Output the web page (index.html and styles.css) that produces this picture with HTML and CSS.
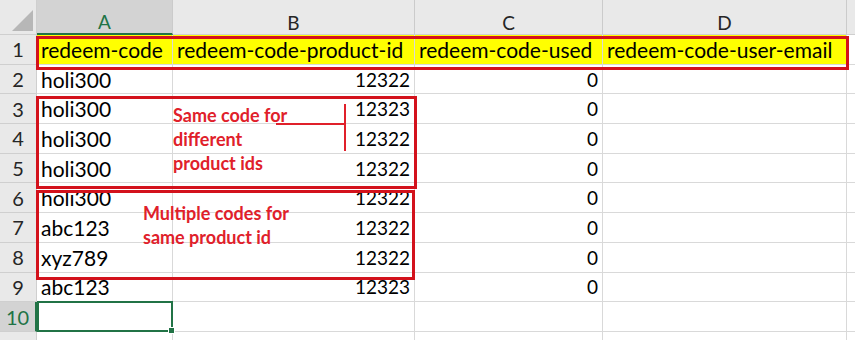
FILE: index.html
```html
<!DOCTYPE html>
<html>
<head>
<meta charset="utf-8">
<link rel="stylesheet" href="styles.css">
</head>
<body>
<div class="sheet">
  <div class="grid">
    <div class="hd corner"><span class="tri"></span></div>
    <div class="hd col sel">A</div>
    <div class="hd col">B</div>
    <div class="hd col">C</div>
    <div class="hd col">D</div>
    <div class="hd col last"></div>

    <div class="hd rowh">1</div>
    <div class="c y">redeem-code</div>
    <div class="c y">redeem-code-product-id</div>
    <div class="c y">redeem-code-used</div>
    <div class="c y">redeem-code-user-email</div>
    <div class="c last"></div>

    <div class="hd rowh">2</div>
    <div class="c">holi300</div><div class="c n">12322</div><div class="c n">0</div><div class="c"></div><div class="c last"></div>
    <div class="hd rowh">3</div>
    <div class="c">holi300</div><div class="c n">12323</div><div class="c n">0</div><div class="c"></div><div class="c last"></div>
    <div class="hd rowh">4</div>
    <div class="c">holi300</div><div class="c n">12322</div><div class="c n">0</div><div class="c"></div><div class="c last"></div>
    <div class="hd rowh">5</div>
    <div class="c">holi300</div><div class="c n">12322</div><div class="c n">0</div><div class="c"></div><div class="c last"></div>
    <div class="hd rowh">6</div>
    <div class="c">holi300</div><div class="c n">12322</div><div class="c n">0</div><div class="c"></div><div class="c last"></div>
    <div class="hd rowh">7</div>
    <div class="c">abc123</div><div class="c n">12322</div><div class="c n">0</div><div class="c"></div><div class="c last"></div>
    <div class="hd rowh">8</div>
    <div class="c">xyz789</div><div class="c n">12322</div><div class="c n">0</div><div class="c"></div><div class="c last"></div>
    <div class="hd rowh">9</div>
    <div class="c">abc123</div><div class="c n">12323</div><div class="c n">0</div><div class="c"></div><div class="c last"></div>
    <div class="hd rowh rsel">10</div>
    <div class="c active"><span class="handle"></span></div><div class="c"></div><div class="c"></div><div class="c"></div><div class="c last"></div>
    <div class="hd rowh"></div>
    <div class="c"></div><div class="c"></div><div class="c"></div><div class="c"></div><div class="c last"></div>
  </div>

  <div class="box box-head"></div>
  <div class="box box-same"></div>
  <div class="box box-multi"></div>

  <div class="note note-same">Same code for<br>different<br>product ids</div>
  <div class="note note-multi">Multiple codes for<br>same product id</div>
  <div class="bracket-h"></div>
  <div class="bracket-v"></div>
</div>
</body>
</html>
```

FILE: styles.css
```css
html, body {
  margin: 0;
  padding: 0;
  background: #ffffff;
}

.sheet {
  position: relative;
  width: 855px;
  height: 340px;
  overflow: hidden;
  font-family: Lato, "Open Sans", sans-serif;
}

.grid {
  display: grid;
  grid-template-columns: 37px 136px 242px 188px 244px 8px;
  grid-template-rows: 35px repeat(10, 29.7px) 20px;
}

.hd {
  background: #e9e9e9;
  color: #333333;
  box-sizing: border-box;
  display: flex;
  align-items: center;
  justify-content: center;
  font-size: 19px;
}

.corner {
  border-right: 1px solid #cfcfcf;
  border-bottom: 1px solid #cfcfcf;
  position: relative;
}

.tri {
  position: absolute;
  right: 3px;
  bottom: 3px;
  width: 21px;
  height: 21px;
  background: #b7b7b7;
  clip-path: polygon(100% 0, 100% 100%, 0 100%);
}

.col {
  border-right: 1px solid #cbcbcb;
  border-bottom: 1px solid #cfcfcf;
  padding-top: 10px;
  color: #262626;
}

.col.sel {
  background: #d3d3d3;
  color: #217346;
  border-bottom: 2px solid #217346;
}

.rowh {
  border-bottom: 1px solid #cfcfcf;
  border-right: 1px solid #cfcfcf;
  color: #262626;
  font-size: 20px;
}

.rowh.rsel {
  background: #d3d3d3;
  color: #217346;
  border-right: 2px solid #217346;
}

.c {
  box-sizing: border-box;
  border-right: 1px solid #d9d9d9;
  border-bottom: 1px solid #d9d9d9;
  font-size: 21px;
  color: #000000;
  display: flex;
  align-items: center;
  padding: 0 4px;
  white-space: nowrap;
  overflow: visible;
}

.c.n {
  justify-content: flex-end;
  font-size: 19px;
  padding-right: 4px;
}

.c.y {
  background: #ffff00;
}

.col.last, .c.last {
  border-right: none;
}

.c.active {
  border: 2px solid #217346;
  position: relative;
  margin-top: -1px;
}

.handle {
  position: absolute;
  right: -4px;
  bottom: -4px;
  width: 5px;
  height: 5px;
  background: #217346;
  border: 1px solid #ffffff;
}

.box {
  position: absolute;
  border: 3px solid #d3121c;
  box-sizing: border-box;
}

.box-head {
  left: 36px;
  top: 36px;
  width: 813px;
  height: 34px;
}

.box-same {
  left: 36px;
  top: 96px;
  width: 381px;
  height: 93px;
}

.box-multi {
  left: 36px;
  top: 190px;
  width: 379px;
  height: 90px;
}

.note {
  position: absolute;
  color: #e0202a;
  font-weight: bold;
  font-size: 18px;
  line-height: 24px;
}

.note-same {
  left: 173px;
  top: 103px;
}

.note-multi {
  left: 143px;
  top: 201px;
}

.bracket-h {
  position: absolute;
  left: 276px;
  top: 123px;
  width: 70px;
  height: 2px;
  background: #e0202a;
}

.bracket-v {
  position: absolute;
  left: 344px;
  top: 104px;
  width: 2px;
  height: 47px;
  background: #e0202a;
}
```
